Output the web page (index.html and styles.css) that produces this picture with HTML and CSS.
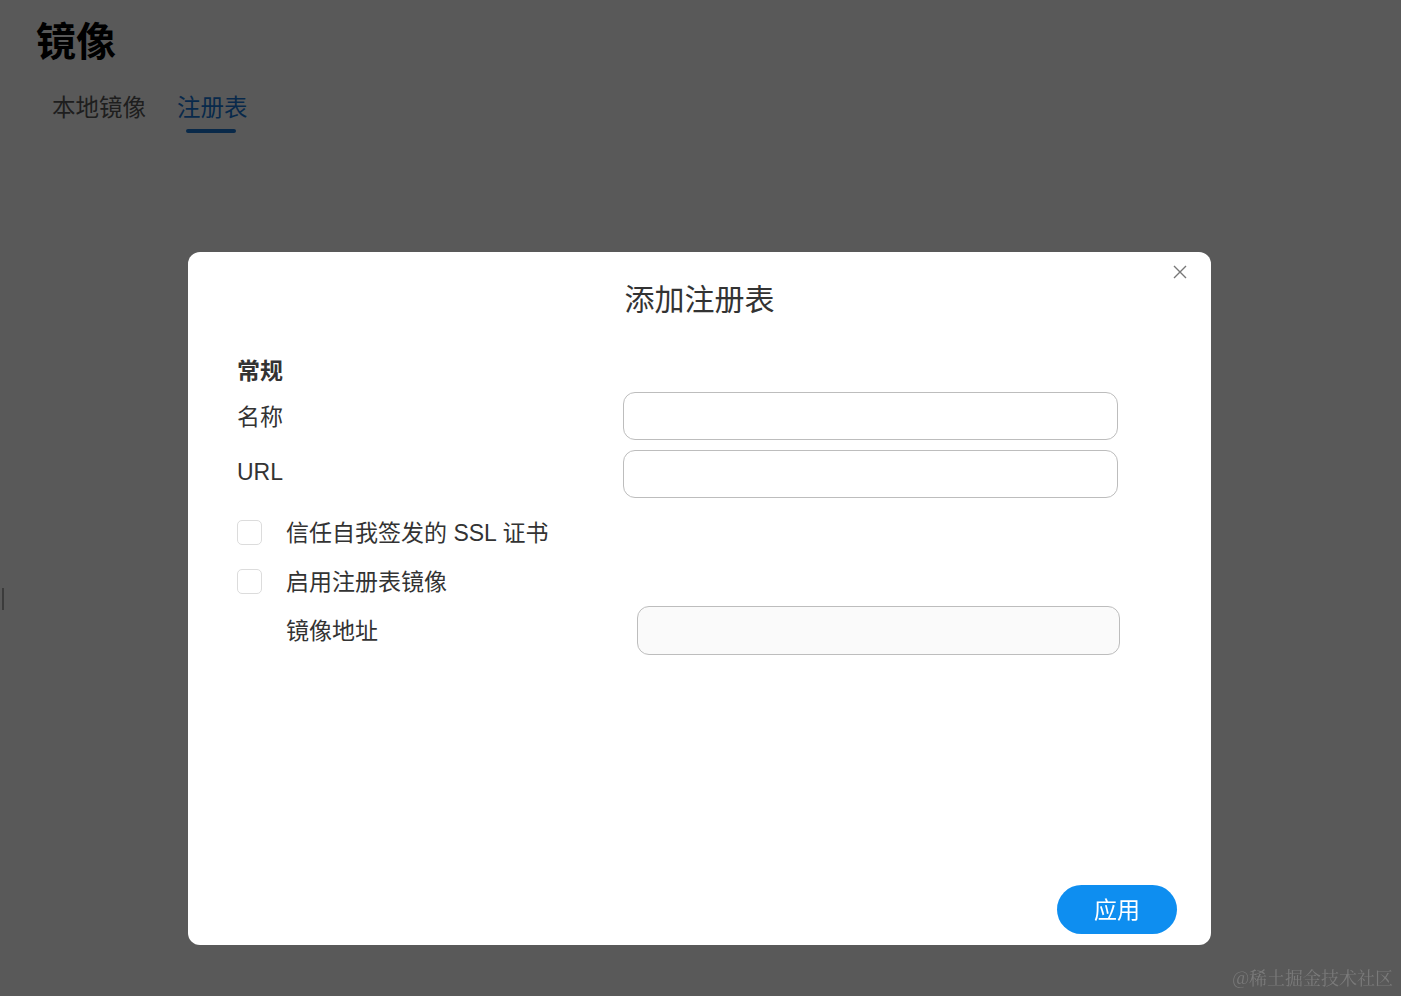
FILE: index.html
```html
<!DOCTYPE html>
<html lang="zh-CN">
<head>
    <meta charset="UTF-8">
    <meta name="viewport" content="width=device-width, initial-scale=1.0">
    <link rel="stylesheet" href="styles.css">
</head>
<body>
    <div class="page">
        <h1 class="page-title">镜像</h1>
        <div class="tabs">
            <span class="tab">本地镜像</span>
            <span class="tab tab-active">注册表</span>
        </div>
        <div class="side-handle"></div>
    </div>

    <div class="mask">
        <div class="modal">
            <svg class="modal-close" width="14" height="14" viewBox="0 0 14 14">
                <path d="M1 1 L13 13 M13 1 L1 13" stroke="#777" stroke-width="1.4" fill="none"/>
            </svg>
            <h2 class="modal-title">添加注册表</h2>

            <div class="form">
                <div class="section">常规</div>
                <div class="row row-first">
                    <label class="row-label">名称</label>
                    <input type="text" class="field">
                </div>
                <div class="row">
                    <label class="row-label">URL</label>
                    <input type="text" class="field">
                </div>
                <div class="check-row">
                    <span class="checkbox"></span>
                    <span class="check-label">信任自我签发的 SSL 证书</span>
                </div>
                <div class="check-row check-row-tight">
                    <span class="checkbox"></span>
                    <span class="check-label">启用注册表镜像</span>
                </div>
                <div class="row row-sub">
                    <label class="row-label sub-label">镜像地址</label>
                    <input type="text" class="field field-disabled" disabled>
                </div>
            </div>

            <div class="modal-footer">
                <button class="btn-apply">应用</button>
            </div>
        </div>
    </div>

    <div class="watermark">@稀土掘金技术社区</div>
</body>
</html>
```

FILE: styles.css
```css
html, body {
    margin: 0;
    padding: 0;
    height: 100%;
}
body {
    background: #fff;
    font-family: "Liberation Sans", "Noto Sans CJK SC", sans-serif;
    color: #333;
    overflow: hidden;
}
.page {
    padding: 16px 36px;
}
.page-title {
    margin: 0;
    font-size: 40px;
    font-weight: 700;
    color: #000;
    line-height: 52px;
}
.tabs {
    display: flex;
    gap: 31px;
    margin-top: 23px;
    padding-left: 16px;
}
.tab {
    font-size: 23.5px;
    line-height: 34px;
    color: #585858;
    position: relative;
}
.tab-active {
    color: #1777d6;
}
.tab-active::after {
    content: "";
    position: absolute;
    left: 9px;
    right: 12px;
    bottom: -8px;
    height: 4px;
    border-radius: 2px;
    background: #1a75d0;
}
.side-handle {
    position: absolute;
    left: 2px;
    top: 588px;
    width: 2px;
    height: 22px;
    background: #aaa;
}

.mask {
    position: fixed;
    inset: 0;
    background: rgba(0, 0, 0, 0.65);
    display: flex;
    justify-content: center;
    align-items: flex-start;
    padding: 252px 2px 0 0;
}
.modal {
    position: relative;
    width: 1023px;
    height: 693px;
    background: #fff;
    border-radius: 12px;
    box-sizing: border-box;
    display: flex;
    flex-direction: column;
}
.modal-close {
    position: absolute;
    top: 13px;
    right: 24px;
}
.modal-title {
    margin: 30px 0 0;
    text-align: center;
    font-size: 30px;
    font-weight: 400;
    line-height: 36px;
    color: #333;
}
.form {
    padding: 0 49px;
    flex: 1;
}
.section {
    margin-top: 38px;
    font-size: 23px;
    font-weight: 700;
    line-height: 30px;
    color: #333;
}
.row {
    display: flex;
    align-items: center;
    height: 48px;
    margin-top: 10px;
}
.row-first {
    margin-top: 6px;
}
.row-label {
    width: 386px;
    font-size: 23px;
    color: #333;
    padding-bottom: 3px;
}
.field {
    width: 495px;
    height: 48px;
    box-sizing: border-box;
    border: 1px solid #bdbdbd;
    border-radius: 12px;
    background: #fff;
    outline: none;
    padding: 0 14px;
    font-size: 18px;
}
.check-row {
    display: flex;
    align-items: center;
    gap: 24px;
    height: 48px;
    margin-top: 10px;
}
.check-row-tight {
    margin-top: 1px;
}
.checkbox {
    width: 25px;
    height: 25px;
    box-sizing: border-box;
    border: 1px solid #dcdcdc;
    border-radius: 5px;
    background: #fff;
}
.check-label {
    font-size: 23px;
    color: #333;
    padding-bottom: 3px;
}
.row-sub {
    height: 49px;
    margin-top: 1px;
}
.sub-label {
    width: 351px;
    padding-left: 49px;
}
.field-disabled {
    width: 483px;
    height: 49px;
    background: #fafafa;
}
.modal-footer {
    display: flex;
    justify-content: flex-end;
    padding: 0 34px 11px 0;
}
.btn-apply {
    width: 120px;
    height: 49px;
    padding: 0 0 4px;
    border: none;
    border-radius: 25px;
    background: #0e8ef0;
    color: #fff;
    font-family: "Noto Sans CJK SC", sans-serif;
    font-size: 23px;
    cursor: pointer;
}
.watermark {
    position: fixed;
    right: 8px;
    bottom: 6px;
    font-family: "Noto Serif CJK SC", "Noto Sans CJK SC", serif;
    font-size: 18px;
    color: #7a7a7a;
}
```
